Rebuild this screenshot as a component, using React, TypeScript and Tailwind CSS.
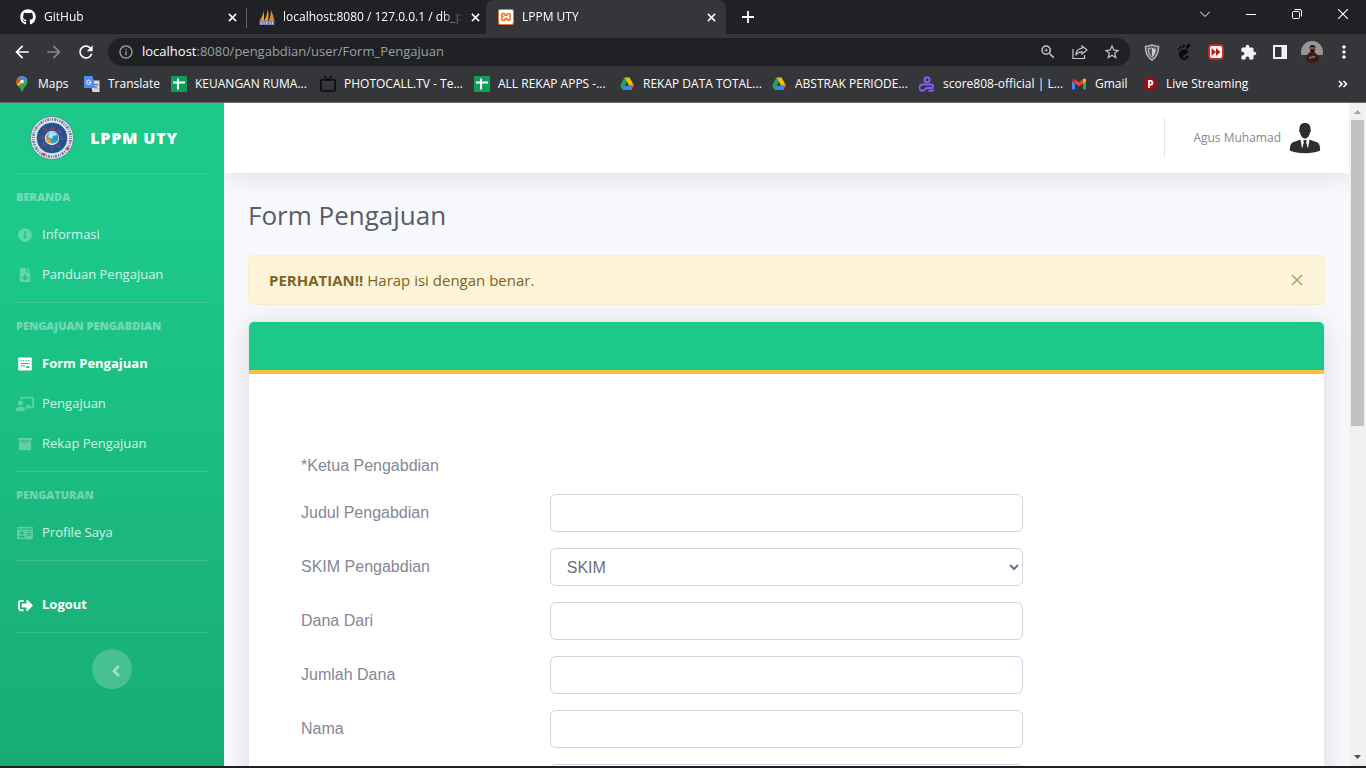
import React from "react";
import type { ReactNode } from "react";
import { FaArchive, FaChalkboardTeacher, FaAngleLeft, FaFileDownload, FaGithub, FaIdCard, FaInfoCircle, FaSignOutAlt } from "react-icons/fa";
import { MdArrowBack, MdArrowForward, MdExtension, MdInfoOutline, MdMoreVert, MdRefresh, MdStarBorder, MdZoomIn } from "react-icons/md";
import { SiGnome, SiXampp } from "react-icons/si";

const X = () => (
  <svg viewBox="0 0 10 10" className="size-[9px]" stroke="currentColor" strokeWidth="1.7">
    <path d="M1 1l8 8M9 1L1 9" />
  </svg>
);

const Sails = () => (
  <svg viewBox="0 0 16 16" className="size-4 shrink-0">
    <path d="M5 1.500V12H0.500C2.800 8.500 4.300 5 5 1.500z" fill="#f89c0e" />
    <path d="M8.600 0.200c1.200 4 1.200 8-.2 11.800H5.200C7.400 8.500 8.400 4.500 8.600.2z" fill="#f8a73c" />
    <path d="M11.800 1c1.800 3.500 3 7 3.400 11H9.300c2-3 2.700-7 2.500-11z" fill="#e8871a" />
    <path d="M0.500 11.500h15V16h-15z" fill="#6c78af" />
    <path d="M2 15.500V13h1.500M5 15.500V12.500M7.500 15.500V13h1.500M11 15.500V12.500M13.500 12.500v3" stroke="#c9cde4" fill="none" />
  </svg>
);

const Sheets = () => (
  <svg viewBox="0 0 16 16" className="size-4">
    <rect width="16" height="16" rx="1" fill="#0f9d58" />
    <path d="M7 2.500v11M2 6.500h12" stroke="#fff" strokeWidth="2" />
  </svg>
);

const Drive = () => (
  <svg viewBox="0 0 16 16" className="size-4">
    <path d="M5.500 1.500L8 6 3.500 14 1 9.800z" fill="#1fa463" />
    <path d="M5.500 1.500h5L15 9.800h-4.800z" fill="#fbbc04" />
    <path d="M10.500 9.800H15L12.500 14z" fill="#ea4335" />
    <path d="M5.800 9.800h6.700V14h-9z" fill="#4285f4" />
  </svg>
);

const MapPin = () => (
  <svg viewBox="0 0 16 16" className="size-4">
    <path d="M8 15.800c-.7 0-.8-1.500-1.500-2.800C5.500 11 2.500 9 2.500 5.500A5.500 5.500 0 018 .2a5.500 5.500 0 015.500 5.300c0 3.500-3 5.500-4 7.500-.7 1.300-.8 2.800-1.500 2.800z" fill="#34a853" />
    <path d="M8 .2c2.200 0 4 1.200 5 3L4 10C3 8.700 2.500 7.300 2.500 5.500A5.500 5.500 0 018 .2z" fill="#fbbc04" />
    <path d="M3.800 2a5.500 5.500 0 014.200-1.800l3.500 1.300L8 5.500z" fill="#4285f4" />
    <path d="M3.800 2L7 4.700 3 8C2 5.500 2.600 3.300 3.800 2z" fill="#ea4335" />
    <path d="M8 .2c2.200 0 4.200 1.300 5 3L9.500 6.500 7 4.500z" fill="#4285f4" />
    <circle cx="8" cy="5.500" r="1.800" fill="#fff" />
  </svg>
);

const Translate = () => (
  <svg viewBox="0 0 16 16" className="size-4">
    <path d="M6 4.500h9.500V16H8.500z" fill="#d7dade" />
    <path d="M0 0h8.500l3 12H0z" fill="#4e8df5" />
    <path d="M6.800 5.300a2.200 2.200 0 10.2 1.200H4.800" stroke="#fff" fill="none" />
    <path d="M10 8.500h4.500M12.200 7.500v1M13.500 8.800c-.5 2-1.500 3-2.700 4M11.200 9.800c.7 1.500 1.500 2.200 2.800 3" stroke="#6b7280" strokeWidth=".8" fill="none" />
  </svg>
);

const Tv = () => (
  <svg viewBox="0 0 16 16" className="size-4" stroke="#0b0b0c" strokeWidth="1.600" fill="none">
    <rect x=".8" y="4" width="14.400" height="11" rx="1" />
    <path d="M4.500 .5L8 4l3.500-3.500" />
  </svg>
);

const Score = () => (
  <svg viewBox="0 0 16 16" className="size-4" stroke="#8b5cf6" strokeWidth="2" fill="none">
    <circle cx="8" cy="3.700" r="2.500" />
    <path d="M8 12h5a2 2 0 000-3.500H3.500a3 3 0 000 6.300c2.500 0 2.500-2.800 5-2.800M9.500 14.800H13a1.800 1.800 0 001.500-1.500" />
  </svg>
);

const Gmail = () => (
  <svg viewBox="0 0 16 16" className="size-4">
    <path d="M1 4v9.500h3V7z" fill="#4285f4" />
    <path d="M15 4v9.500h-3V7z" fill="#34a853" />
    <path d="M4 7.500V3.200l4 3 4-3v4.300l-4 3z" fill="#ea4335" />
    <path d="M1 5.200V4c0-1.600 1.600-2 3-.8v4.300z" fill="#c5221f" />
    <path d="M15 5.200V4c0-1.600-1.600-2-3-.8v4.300z" fill="#fbbc04" />
  </svg>
);

const Live = () => (
  <svg viewBox="0 0 16 16" className="size-4">
    <circle cx="8" cy="8" r="6.800" fill="#a30b10" />
    <path d="M7 12V4.800h1.500a1.900 1.900 0 010 3.900H7" stroke="#fff" strokeWidth="1.800" fill="none" />
  </svg>
);

const tabs = [
  { title: "GitHub", icon: <FaGithub className="size-4 text-white" />, active: false },
  { title: "localhost:8080 / 127.0.0.1 / db_p", icon: <Sails />, active: false },
  { title: "LPPM UTY", icon: <span className="flex size-4 items-center justify-center rounded-xs bg-[#e9772e]"><SiXampp className="size-3.5 text-white" /></span>, active: true },
];

const bookmarks = [
  { label: "Maps", icon: <MapPin />, w: "w-[70px]" },
  { label: "Translate", icon: <Translate />, w: "w-[87px]" },
  { label: "KEUANGAN RUMA...", icon: <Sheets />, w: "w-[149px]" },
  { label: "PHOTOCALL.TV - Te...", icon: <Tv />, w: "w-[154px]" },
  { label: "ALL REKAP APPS -...", icon: <Sheets />, w: "w-[145px]" },
  { label: "REKAP DATA TOTAL...", icon: <Drive />, w: "w-[152px]" },
  { label: "ABSTRAK PERIODE...", icon: <Drive />, w: "w-[148px]" },
  { label: "score808-official | L...", icon: <Score />, w: "w-[152px]" },
  { label: "Gmail", icon: <Gmail />, w: "w-[71px]" },
  { label: "Live Streaming", icon: <Live />, w: "w-[110px]" },
];

function TabStrip() {
  return (
    <div className="flex h-[34px] bg-[#202124] pl-2 text-white">
      {tabs.map((t, i) => (
        <div
          key={t.title}
          className={
            t.active
              ? "relative flex w-60 items-center gap-2 rounded-t-lg bg-[#35363a] pr-2.5 pl-3"
              : "relative flex w-[239px] items-center gap-2 pr-2.5 pl-3"
          }
        >
          {t.icon}
          <span className="flex-1 text-xs whitespace-nowrap [mask-image:linear-gradient(to_right,black_88%,transparent)]">{t.title}</span>
          <button aria-label={"Close " + t.title} className="flex shrink-0 justify-center"><X /></button>
          {i === 0 && <span className="absolute top-2 right-0 h-5 w-px bg-[#5f6368]" />}
        </div>
      ))}
      <button aria-label="New tab" className="flex w-11 items-center justify-center">
        <svg viewBox="0 0 12 12" className="size-3" stroke="currentColor" strokeWidth="1.800"><path d="M6 0v12M0 6h12" /></svg>
      </button>
      <div className="ml-auto flex h-7 [&>button]:flex [&>button]:w-[46px] [&>button]:items-center [&>button]:justify-center">
        <button aria-label="Search tabs"><svg viewBox="0 0 10 10" className="size-2.5" fill="none" stroke="currentColor"><path d="M0 2.500l5 5 5-5" /></svg></button>
        <button aria-label="Minimize"><svg viewBox="0 0 10 10" className="size-2.5" stroke="currentColor"><path d="M0 5.500h10" /></svg></button>
        <button aria-label="Restore"><svg viewBox="0 0 10 10" className="size-2.5" fill="none" stroke="currentColor"><rect x=".5" y="2.500" width="7" height="7" rx="1" /><path d="M2.500 .5H8A1.500 1.500 0 019.500 2v5.500" /></svg></button>
        <button aria-label="Close window"><svg viewBox="0 0 10 10" className="size-2.5" stroke="currentColor" strokeWidth="1.100"><path d="M0 0l10 10M10 0L0 10" /></svg></button>
      </div>
    </div>
  );
}

function Toolbar() {
  return (
    <div className="flex h-9 items-center bg-[#35363a] pl-1.5 text-white">
      <div className="flex w-[102px] [&>button]:flex [&>button]:w-8 [&>button]:items-center [&>button]:justify-center">
        <button aria-label="Back"><MdArrowBack className="size-5" /></button>
        <button aria-label="Forward" className="text-[#85868a]"><MdArrowForward className="size-5" /></button>
        <button aria-label="Reload"><MdRefresh className="size-5" /></button>
      </div>
      <div className="flex h-7 flex-1 items-center rounded-full bg-[#202124] pr-0.5 pl-2.5 text-[#9aa0a6]">
        <MdInfoOutline className="size-4" />
        <span className="ml-2 flex-1 text-[13px]"><span className="text-white">localhost</span>:8080/pengabdian/user/Form_Pengajuan</span>
        <div className="flex text-[#c4c7c5] [&>button]:flex [&>button]:w-8 [&>button]:items-center [&>button]:justify-center">
          <button aria-label="Zoom"><MdZoomIn className="size-[18px]" /></button>
          <button aria-label="Share">
            <svg viewBox="0 0 16 16" className="size-4" fill="none" stroke="currentColor" strokeWidth="1.200">
              <path d="M1 5v9.500h11.500V11" />
              <path d="M10 2l5 4-5 4V7.800C7 7.800 5 9 3.800 11.200 4 7.500 6 4.700 10 4.300z" />
            </svg>
          </button>
          <button aria-label="Bookmark"><MdStarBorder className="size-[18px]" /></button>
        </div>
      </div>
      <div className="ml-1.5 flex pr-1.5 [&>button]:flex [&>button]:w-8 [&>button]:items-center [&>button]:justify-center">
        <button aria-label="Shield">
          <svg viewBox="0 0 16 18" className="h-[17px] w-4"><path d="M1 2.500c3 0 5-.3 7-1.500 2 1.200 4 1.500 7 1.500 0 7-2 11.500-7 14.500C3 14 1 9.500 1 2.500z" fill="#55565a" stroke="#b9babd" strokeWidth="1.500" /><path d="M8 4v10c2.500-2 4-5 4-9-1.500 0-2.800-.3-4-1z" fill="#c8c9cc" /><path d="M8 4c-1.200.7-2.500 1-4 1 0 4 1.500 7 4 9" fill="none" stroke="#c8c9cc" /></svg>
        </button>
        <button aria-label="Gnome"><SiGnome className="size-4 text-[#0c0c0d]" /></button>
        <button aria-label="Fast forward">
          <svg viewBox="0 0 16 16" className="size-4"><rect x="1" y="1" width="14" height="14" rx="3" fill="#fff" stroke="#c62828" strokeWidth="2" /><path d="M3.500 4v8L8 8zM8 4v8l4.500-4z" fill="#b71c1c" /></svg>
        </button>
        <button aria-label="Extensions"><MdExtension className="size-[17px] text-[#f1f3f4]" /></button>
        <button aria-label="Side panel">
          <svg viewBox="0 0 14 14" className="size-3.5"><path d="M0 0h14v14H0zM2 2v10h6.500V2z" fill="#f1f3f4" fillRule="evenodd" /></svg>
        </button>
        <button aria-label="Profile">
          <svg viewBox="0 0 22 22" className="size-[22px]">
            <defs><clipPath id="face"><circle cx="11" cy="11" r="11" /></clipPath></defs>
            <g clipPath="url(#face)">
              <path d="M0 0h22v22H0z" fill="#9a9693" />
              <path d="M0 14h22v8H0z" fill="#34302f" />
              <path d="M5 22c0-8 2-11 6-11s7 3 8 11z" fill="#3d1a1d" />
              <circle cx="11.500" cy="7.500" r="3" fill="#7d5546" />
              <path d="M8.300 7c0-4 6.400-4 6.400 0l-1.500-1h-3.500zM9 8.500h5c0 2.500-1 3.500-2.500 3.500S9 11 9 8.500z" fill="#1b1616" />
              <path d="M8 17l6-1.500" stroke="#a56c59" strokeWidth="1.500" />
            </g>
          </svg>
        </button>
        <button aria-label="Menu"><MdMoreVert className="size-5" /></button>
      </div>
    </div>
  );
}

function Bookmarks() {
  return (
    <nav aria-label="Bookmarks" className="flex h-[33px] items-start border-b border-[#6a6b6e] bg-[#35363a] pt-1.5 pl-3.5 text-white">
      {bookmarks.map((b) => (
        <a key={b.label} href="#" className={"flex shrink-0 items-center gap-2 text-xs whitespace-nowrap " + b.w}>
          {b.icon}
          <span>{b.label}</span>
        </a>
      ))}
      <button aria-label="More bookmarks" className="mt-1 mr-[18px] ml-auto">
        <svg viewBox="0 0 10 8" className="h-2 w-2.5" fill="none" stroke="currentColor" strokeWidth="1.600"><path d="M1 1l3 3-3 3M5.500 1l3 3-3 3" /></svg>
      </button>
    </nav>
  );
}

const FormIcon = () => (
  <svg viewBox="0 0 14 14" className="size-3.5">
    <path fillRule="evenodd" fill="currentColor" d="M1.500 .5h11a1.300 1.300 0 011.300 1.300v10.400a1.300 1.300 0 01-1.300 1.300h-11A1.300 1.300 0 01.200 12.200V1.800A1.300 1.300 0 011.500.5zM2.500 3v1.200h1.200V3zM5 3v1.200h1.200V3zM7.700 3v1.200h1.200V3zM10.300 3v1.200h1.200V3zM2.500 6v1h9V6zM2.500 8.600v1h4.500v-1zM8.200 9.300v1.700h3.300V9.300z" />
  </svg>
);

const Divider = () => <hr className="mx-4 border-white/15" />;

function Group({ title, children }: { title: string; children: ReactNode }) {
  return (
    <section className="pb-[7px]">
      <h2 className="flex h-[41px] items-center px-4 pt-1.5 text-[11px] font-extrabold text-white/40 uppercase">{title}</h2>
      {children}
    </section>
  );
}

function Item({ icon, label, active }: { icon: ReactNode; label: string; active?: boolean }) {
  return (
    <a href="#" className={active ? "flex h-10 items-center px-4 text-[13px] font-bold text-white" : "flex h-10 items-center px-4 text-[13px] text-white/80"}>
      <span className={active ? "mr-2 flex w-[18px] justify-center" : "mr-2 flex w-[18px] justify-center text-white/30"}>{icon}</span>
      {label}
    </a>
  );
}

function Logo() {
  const rays = [0, 45, 90, 135, 180, 225, 270, 315];
  return (
    <svg viewBox="0 0 44 44" className="size-11">
      <circle cx="22" cy="22" r="21.500" fill="#dfe6ee" stroke="#5f7f95" strokeWidth=".8" />
      <circle cx="22" cy="22" r="18.700" fill="none" stroke="#6c7890" strokeWidth="2.600" strokeDasharray="1.200 1.100 2 .9 .8 1.300" />
      <circle cx="22" cy="22" r="15.800" fill="#1d5592" stroke="#eef3f7" strokeWidth=".8" />
      {rays.map((a) => (
        <path key={a} d="M22 8.500l2.500 4.500-2.500-1-2.500 1" fill="none" stroke="#b13a58" strokeWidth="1" transform={"rotate(" + a + " 22 22)"} />
      ))}
      <circle cx="22" cy="22" r="7.200" fill="#dcebf2" />
      <circle cx="22.500" cy="21.500" r="6" fill="#2a9ac4" />
      <path d="M19 17c3-2 7-1 8 2l-4 1-1 3-4-2z" fill="#b9e3ec" />
      <path d="M16 22l4 1 2 4c-4 1-6-2-6-5z" fill="#f0952c" />
      <circle cx="14" cy="38.500" r="1.600" fill="#dc3541" />
      <circle cx="37.500" cy="32.500" r="1.600" fill="#dc3541" />
    </svg>
  );
}

function Sidebar() {
  return (
    <aside className="w-56 shrink-0 overflow-hidden bg-linear-to-b from-[#1cc88a] from-20% to-[#18ab76]">
      <a href="#" className="flex h-[70px] items-center justify-center gap-4 pr-4 text-base font-extrabold tracking-wider text-white">
        <Logo />
        LPPM UTY
      </a>
      <Divider />
      <Group title="Beranda">
        <Item icon={<FaInfoCircle className="size-3.5" />} label="Informasi" />
        <Item icon={<FaFileDownload className="size-3.5" />} label="Panduan Pengajuan" />
      </Group>
      <Divider />
      <Group title="Pengajuan Pengabdian">
        <Item active icon={<FormIcon />} label="Form Pengajuan" />
        <Item icon={<FaChalkboardTeacher className="size-[18px]" />} label="Pengajuan" />
        <Item icon={<FaArchive className="size-3.5" />} label="Rekap Pengajuan" />
      </Group>
      <Divider />
      <Group title="Pengaturan">
        <Item icon={<FaIdCard className="size-4" />} label="Profile Saya" />
      </Group>
      <Divider />
      <div className="pt-6 pb-[7px]">
        <Item active icon={<FaSignOutAlt className="size-[15px]" />} label="Logout" />
      </div>
      <Divider />
      <button aria-label="Collapse sidebar" className="mx-auto mt-4 flex size-10 items-center justify-center rounded-full bg-white/20 pt-1 pl-2 text-white/50">
        <FaAngleLeft className="size-[18px]" />
      </button>
    </aside>
  );
}

const fieldClass = "col-span-6 h-[38px] w-full rounded-md border border-[#d1d3e2] bg-white px-3 text-base text-[#6e707e]";

const fields = [
  { id: "judul", label: "Judul Pengabdian" },
  { id: "skim", label: "SKIM Pengabdian", options: ["SKIM"] },
  { id: "dana", label: "Dana Dari" },
  { id: "jumlah", label: "Jumlah Dana" },
  { id: "nama", label: "Nama" },
];

function PageForm() {
  return (
    <section className="mt-4 rounded-md border border-[#e3e6f0] bg-white shadow-[0_2px_28px_rgba(58,59,69,0.15)]">
      <div className="h-[52px] rounded-t-[5px] border-b-4 border-[#f6c23e] bg-[#1cc88a]" />
      <form className="px-[52px] pt-20 pb-12 font-['Liberation_Sans',Arial,sans-serif] text-base text-[#858796]">
        <p className="mb-4 leading-6">*Ketua Pengabdian</p>
        <div className="flex flex-col gap-4">
          {fields.map((f) => (
            <div key={f.id} className="grid grid-cols-12 items-center gap-x-6">
              <label htmlFor={f.id} className="col-span-3">{f.label}</label>
              {f.options ? (
                <select id={f.id} className={fieldClass}>
                  {f.options.map((o) => <option key={o}>{o}</option>)}
                </select>
              ) : (
                <input id={f.id} type="text" className={fieldClass} />
              )}
            </div>
          ))}
          <div className="grid grid-cols-12 gap-x-6">
            <input aria-label="NIDN" type="text" className={fieldClass + " col-start-4"} />
          </div>
        </div>
      </form>
    </section>
  );
}

function Content() {
  return (
    <div className="min-w-0 flex-1 overflow-hidden bg-[#f8f9fc]">
      <header className="flex h-[70px] items-center justify-end bg-white pr-7 shadow-[0_2px_28px_rgba(58,59,69,0.15)]">
        <span className="h-10 w-px bg-[#e3e6f0]" />
        <a href="#" className="ml-7 flex items-center gap-2 text-xs text-[#858796]">
          Agus Muhamad
          <svg viewBox="0 0 32 32" className="size-8" fill="#2f2f2f">
            <path d="M16 1c4 0 5.800 2.500 5.500 6.500.8.300.5 2.500-.6 3C20.500 14 18.500 16.500 16 16.500S11.500 14 11.100 10.500c-1.100-.5-1.400-2.700-.6-3C10.200 3.500 12 1 16 1z" />
            <path d="M11.500 17.500L3.500 20.500C1.500 21.500.8 25 .8 28.500 5 30.300 10 31.200 16 31.200s11-.9 15.200-2.700c0-3.500-.7-7-2.700-8l-8-3-1.500 9-2-6 1-1.800L16 17.700l-2 1 1 1.800-2 6z" />
            <path d="M15 20.500h2l1.400 8.500-2.400 2-2.400-2z" />
          </svg>
        </a>
      </header>
      <main className="p-6">
        <h1 className="text-[26px] leading-9 text-[#5a5c69]">Form Pengajuan</h1>
        <div role="alert" className="mt-[22px] flex h-[50px] items-center justify-between rounded-md border border-[#fceec9] bg-[#fdf3d8] px-5 text-[15px] text-[#806520]">
          <p><strong>PERHATIAN!!</strong> Harap isi dengan benar.</p>
          <button aria-label="Dismiss" className="flex size-3.5 items-center justify-center text-[#806520]/60">
            <svg viewBox="0 0 12 12" className="size-3" stroke="currentColor" strokeWidth="1.500"><path d="M1 1l10 10M11 1L1 11" /></svg>
          </button>
        </div>
        <PageForm />
      </main>
    </div>
  );
}

function ScrollRail() {
  return (
    <div className="flex w-[17px] shrink-0 flex-col items-center bg-[#f1f1f1]">
      <svg viewBox="0 0 17 17" className="size-[17px]" fill="#a3a3a3"><path d="M5 11h7L8.500 7z" /></svg>
      <div className="h-[306px] w-[13px] bg-[#c1c1c1]" />
      <svg viewBox="0 0 17 17" className="mt-auto size-[17px]" fill="#505050"><path d="M5 6h7L8.500 10z" /></svg>
    </div>
  );
}

export default function App() {
  return (
    <div className="flex h-screen flex-col overflow-hidden border-b-2 border-[#202124] font-['Open_Sans','Noto_Sans',sans-serif]">
      <TabStrip />
      <Toolbar />
      <Bookmarks />
      <div className="flex min-h-0 flex-1">
        <Sidebar />
        <Content />
        <ScrollRail />
      </div>
    </div>
  );
}
